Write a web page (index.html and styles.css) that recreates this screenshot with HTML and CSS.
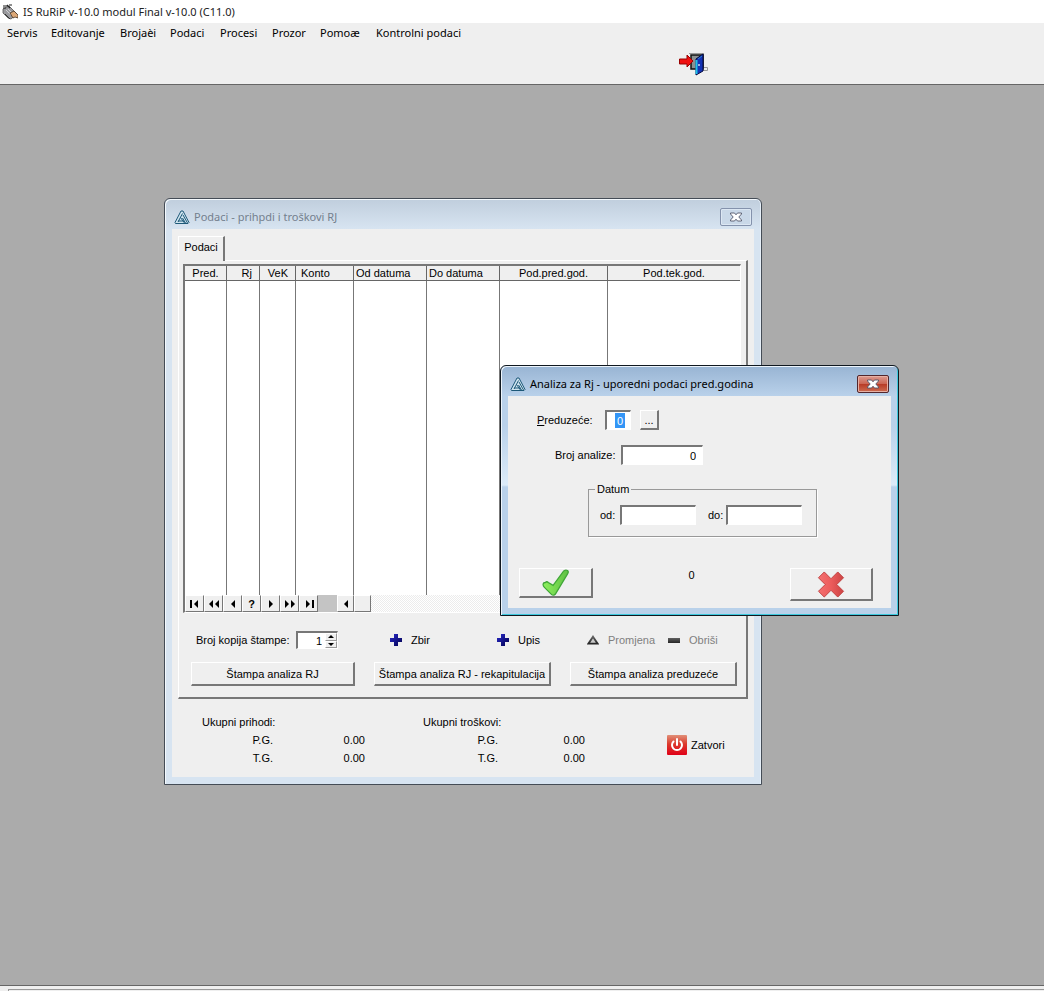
FILE: index.html
```html
<!DOCTYPE html>
<html lang="bs">
<head>
<meta charset="utf-8">
<title>IS RuRiP v-10.0 modul Final v-10.0 (C11.0)</title>
<link rel="stylesheet" href="styles.css">
</head>
<body>
<svg class="defs" aria-hidden="true">
  <defs>
    <linearGradient id="gNavy" x1="0" y1="0" x2="1" y2="1"><stop offset="0" stop-color="#2a2acc"/><stop offset="1" stop-color="#00004c"/></linearGradient>
    <linearGradient id="gDark" x1="0" y1="0" x2="0" y2="1"><stop offset="0" stop-color="#606060"/><stop offset="1" stop-color="#262626"/></linearGradient>
    <linearGradient id="gPower" x1="0" y1="0" x2="0" y2="1"><stop offset="0" stop-color="#e09078"/><stop offset=".45" stop-color="#dc3a2c"/><stop offset="1" stop-color="#e00018"/></linearGradient>
    <linearGradient id="gGreen" x1="0" y1="0" x2="1" y2="0"><stop offset="0" stop-color="#8df05c"/><stop offset="1" stop-color="#5fc044"/></linearGradient>
    <linearGradient id="gRed" x1="0" y1="0" x2="1" y2="0"><stop offset="0" stop-color="#f47070"/><stop offset=".5" stop-color="#ec5c5c"/><stop offset="1" stop-color="#cc4444"/></linearGradient>
    <symbol id="logo" viewBox="0 0 16 15"><path d="M7 1h2l6 11.500-1 1H1.500L1 12.500Z" fill="#cfe4ef" stroke="#1d5878"/><path d="M8.500 3.500 4 12M9 5l4.500 8M4 11h6M6.500 7.500l4 5.500M8.500 8l3 5" fill="none" stroke="#1d5878"/></symbol>
    <symbol id="plus" viewBox="0 0 12 12"><path d="M4 0h4v4h4v4H8v4H4V8H0V4h4Z" fill="url(#gNavy)"/></symbol>
    <symbol id="cross" viewBox="0 0 12 10"><path d="M.5 1h4L6 2.800 7.500 1h4v1L8.800 5l2.700 3v1h-4L6 7.200 4.500 9h-4V8l2.700-3L.5 2Z" fill="#fff" stroke="#50566a" stroke-width=".9"/></symbol>
  </defs>
</svg>
<div class="app">
  <header class="titlebar">
    <svg class="app-icon" viewBox="0 0 16 16"><path d="M1 5 7 2l8 8-6 5-3-1-5-5Z" fill="#9a9a9e" stroke="#555" stroke-width=".8"/><path d="M1 2h5M1 4h3M5 1l3 3M7 1h3" stroke="#222" stroke-width="1.200"/><path d="m4 6 6 6M6 5l5 5" stroke="#d0d0d4"/><path d="m8 9 4-2 4 4v3l-3-1-2 1Z" fill="#dca878" stroke="#432" stroke-width=".8"/><path d="m3 10 5 5" stroke="#333"/></svg>
    <h1>IS RuRiP v-10.0 modul Final v-10.0 (C11.0)</h1>
  </header>
  <nav class="menubar">
    <button>Servis</button><button>Editovanje</button><button>Brojaèi</button><button>Podaci</button><button>Procesi</button><button>Prozor</button><button>Pomoæ</button><button>Kontrolni podaci</button>
  </nav>
  <div class="toolbar">
    <button class="exit" aria-label="Izlaz"><svg viewBox="0 0 29 24"><path d="M10 1.500h15M24.500 1v15M24 15.500h4.500v3H20" fill="none" stroke="#9a9a9a"/><path d="M12 3h12v14H12Z" fill="#8a9090" stroke="#111" stroke-width="1.500"/><path d="M17 7 24 2v17l-7 4Z" fill="#1432b4" stroke="#020840"/><path d="M17.500 8v14" stroke="#20c0e8" stroke-width="2"/><path d="m19 7 4-3" stroke="#2880d8"/><circle cx="20" cy="13" r="1" fill="#cde"/><path d="M.5 7H8V3l6 6-6 6v-3H.5Z" fill="#f01010" stroke="#900"/></svg></button>
  </div>
  <main class="workspace">
    <section class="window data-window" aria-label="Podaci">
      <div class="caption"><svg class="logo"><use href="#logo"/></svg><h2>Podaci - prihpdi i troškovi RJ</h2><button class="close" aria-label="Zatvori prozor"><svg><use href="#cross"/></svg></button></div>
      <div class="client data-client">
        <div class="tabs"><button class="tab">Podaci</button></div>
        <div class="panel">
          <div class="browse">
            <table>
              <colgroup><col class="c-pred"><col class="c-rj"><col class="c-vek"><col class="c-konto"><col class="c-date"><col class="c-date"><col class="c-prev"><col></colgroup>
              <thead><tr><th class="center">Pred.</th><th class="right">Rj</th><th class="right">VeK</th><th class="inset">Konto</th><th>Od datuma</th><th>Do datuma</th><th class="center">Pod.pred.god.</th><th class="center">Pod.tek.god.</th></tr></thead>
              <tbody><tr><td></td><td></td><td></td><td></td><td></td><td></td><td></td><td></td></tr></tbody>
            </table>
            <div class="navigator">
              <button aria-label="Prvi"><svg viewBox="0 0 12 8"><path d="M1 0h2v8H1ZM9 0v8L5 4Z"/></svg></button>
              <button aria-label="Stranica nazad"><svg viewBox="0 0 12 8"><path d="M5 0v8L1 4ZM11 0v8L7 4Z"/></svg></button>
              <button aria-label="Prethodni"><svg viewBox="0 0 12 8"><path d="M8 0v8L4 4Z"/></svg></button>
              <button class="query">?</button>
              <button aria-label="Sljedeći"><svg viewBox="0 0 12 8"><path d="M4 0v8l4-4Z"/></svg></button>
              <button aria-label="Stranica naprijed"><svg viewBox="0 0 12 8"><path d="M1 0v8l4-4ZM7 0v8l4-4Z"/></svg></button>
              <button aria-label="Posljednji"><svg viewBox="0 0 12 8"><path d="M3 0v8l4-4ZM9 0h2v8H9Z"/></svg></button>
              <span class="nav-gap"></span>
              <button class="scroll" aria-label="Lijevo"><svg viewBox="0 0 12 8"><path d="M8 0v8L4 4Z"/></svg></button>
              <button class="scroll" aria-label="Klizač"></button>
              <span class="track"></span>
            </div>
          </div>
          <div class="actions">
            <label for="copies">Broj kopija štampe:</label>
            <span class="spin"><input id="copies" type="text" value="1"><span class="arrows"><button aria-label="Više"><svg viewBox="0 0 6 3"><path d="M0 3h6L3 0Z"/></svg></button><button aria-label="Manje"><svg viewBox="0 0 6 3"><path d="M0 0h6L3 3Z"/></svg></button></span></span>
            <button class="flat zbir"><svg><use href="#plus"/></svg>Zbir</button>
            <button class="flat upis"><svg><use href="#plus"/></svg>Upis</button>
            <button class="flat promjena" disabled><svg viewBox="0 0 13 12"><path d="M6.500 2.500 11.500 10h-10Z" fill="#c8c8c8" stroke="url(#gDark)" stroke-width="2"/></svg>Promjena</button>
            <button class="flat obrisi" disabled><svg viewBox="0 0 12 12"><path d="M0 4h12v5H0Z" fill="url(#gDark)"/></svg>Obriši</button>
          </div>
          <div class="prints"><button class="raised">Štampa analiza RJ</button><button class="raised">Štampa analiza RJ - rekapitulacija</button><button class="raised">Štampa analiza preduzeće</button></div>
        </div>
        <div class="footer">
          <dl class="totals income"><dt class="head">Ukupni prihodi:</dt><dt>P.G.</dt><dd>0.00</dd><dt>T.G.</dt><dd>0.00</dd></dl>
          <dl class="totals cost"><dt class="head">Ukupni troškovi:</dt><dt>P.G.</dt><dd>0.00</dd><dt>T.G.</dt><dd>0.00</dd></dl>
          <button class="flat power"><svg viewBox="0 0 20 20"><rect width="20" height="20" rx="1" fill="url(#gPower)"/><path d="M6.500 6.500a5 5 0 1 0 7 0M10 4v6" fill="none" stroke="#fff" stroke-width="2" stroke-linecap="round"/></svg>Zatvori</button>
        </div>
      </div>
    </section>
    <section class="window dialog" role="dialog" aria-label="Analiza za Rj">
      <div class="caption"><svg class="logo"><use href="#logo"/></svg><h2>Analiza za Rj - uporedni podaci pred.godina</h2><button class="close" aria-label="Zatvori dijalog"><svg><use href="#cross"/></svg></button></div>
      <form class="client dialog-client">
        <div class="field company"><label for="company"><u>P</u>reduzeće:</label><span class="sunken code"><input id="company" type="text" value="0"></span><button type="button" class="raised lookup">...</button></div>
        <div class="field number"><label for="number">Broj analize:</label><input class="sunken" id="number" type="text" value="0"></div>
        <fieldset><legend>Datum</legend><div class="dates"><label for="from">od:</label><input class="sunken" id="from" type="text"><label class="until" for="to">do:</label><input class="sunken" id="to" type="text"></div></fieldset>
        <div class="decision">
          <button type="button" class="raised ok" aria-label="U redu"><svg viewBox="0 0 28 28"><path d="M3 14c-3 0-3 3-1 5l7 7c2 2 4 1 5-1L26 5c2-3-1-5-4-3L11 17l-5-3c-1-1-2-1-3 0Z" fill="url(#gGreen)" stroke="#3fa636" stroke-width="1.300"/></svg></button>
          <output>0</output>
          <button type="button" class="raised cancel" aria-label="Odustani"><svg viewBox="0 0 28 28"><path d="m7 1 7 7 7-7 6 6-7 7 7 7-6 6-7-7-7 7-6-6 7-7-7-7Z" fill="url(#gRed)" stroke="#c04040" stroke-linejoin="round"/></svg></button>
        </div>
      </form>
    </section>
  </main>
  <footer class="statusbar"><div class="status-pane"></div></footer>
</div>
</body>
</html>
```
FILE: styles.css
```css
* { box-sizing: border-box; }
body { margin: 0; color: #000; font: 11px/14px "Liberation Sans", Arial, sans-serif; }
button, input { margin: 0; padding: 0; color: inherit; font: inherit; border: 0; border-radius: 0; }
button { background: transparent; }
svg { display: block; flex: none; }
label, h1, h2, dt, dd, button, output { white-space: nowrap; }
.defs { position: absolute; width: 0; height: 0; }

.app { display: flex; flex-direction: column; min-height: 100vh; background: #efefef; }
.titlebar { display: flex; align-items: center; gap: 5px; height: 23px; padding-left: 2px; background: #fff; }
.app-icon { width: 16px; height: 16px; }
h1, h2, .menubar { margin: 0; font: 11px/16px "Segoe UI", "Noto Sans", sans-serif; }
h1 { color: #222; }
.menubar { display: grid; grid-template-columns: 44px 69px 50px 50px 52px 48px 56px 1fr; height: 20px; padding-left: 7px; }
.menubar button { text-align: left; }
.toolbar { display: flex; height: 42px; padding: 9px 0 0 679px; border-bottom: 1px solid #666; }
.exit { height: 24px; }
.exit svg { width: 29px; height: 24px; }
.workspace { position: relative; flex: 1; min-height: 720px; background: #ababab; }
.statusbar { height: 6px; padding: 3px 0 0 8px; border-top: 1px solid #666; }
.status-pane { height: 2px; border-top: 1px solid #999; border-left: 1px solid #999; }

.window { position: absolute; padding: 0 7px 7px; border: 1px solid #444c56; border-radius: 6px 6px 0 0; }
.data-window { left: 164px; top: 113px; width: 598px; background: linear-gradient(#c0cedd, #d7e4f1 30px); box-shadow: inset 1px 1px #f4f9fd, inset -1px 0 #e6eff8; }
.dialog { left: 500px; top: 280px; width: 399px; border-color: #101820; background: linear-gradient(#98b4d3, #b9d1ea 30px, #b9d1ea 60px, #dcebf8 119px, #b9d1ea 121px); box-shadow: inset 1px 1px #edf5fc, inset -1px -1px #3cc8dc; }
.caption { display: flex; align-items: center; height: 30px; padding: 6px 2px 0; }
.logo { width: 16px; height: 15px; }
h2 { flex: 1; padding-left: 4px; }
.data-window h2 { color: #74808e; }
.close { display: flex; align-items: center; justify-content: center; width: 32px; height: 18px; border: 1px solid #8492ac; border-radius: 2px; background: #c9d8e8; box-shadow: inset 0 0 0 1px #dce7f3; }
.close svg { width: 12px; height: 10px; }
.dialog .close { border-color: #52262c; background: linear-gradient(#dc9a90, #cb6654 48%, #b73a26 50%, #cd6c50); box-shadow: inset 0 0 0 1px #e6b0a4; }
.client { background: #efefef; }

.data-client { padding: 7px 6px 10px 6px; }
.tabs { display: flex; height: 24px; }
.tab { width: 47px; height: 25px; padding-bottom: 4px; border: solid; border-width: 1px 2px 0 1px; border-color: #fff #777 #fff #fff; background: #efefef; z-index: 1; }
.panel { padding: 3px 5px 11px 4px; border: solid; border-width: 1px 2px 2px 1px; border-color: #fff #777 #777 #fff; }
.browse { border: solid; border-width: 2px 1px 1px 2px; border-color: #777 #fff #fff #777; }
table { width: 100%; table-layout: fixed; border-collapse: separate; border-spacing: 0; background: #fff; }
.c-pred { width: 42px; } .c-rj { width: 33px; } .c-vek { width: 36px; } .c-konto { width: 58px; } .c-date { width: 73px; } .c-prev { width: 108px; }
th { height: 15px; padding: 0 2px; font-weight: normal; line-height: 13px; text-align: left; white-space: nowrap; border-right: 1px solid #666; border-bottom: 1px solid #666; background: #efefef; }
td { height: 314px; padding: 0; border-right: 1px solid #777; }
th:last-child, td:last-child { border-right: 0; }
th.center { text-align: center; }
th.right { padding-right: 7px; text-align: right; }
th.inset { padding-left: 5px; }
.navigator { display: flex; height: 17px; }
.navigator button { display: flex; align-items: center; justify-content: center; width: 19px; border: 1px solid; border-color: #fff #777 #777 #fff; background: #efefef; }
.navigator svg { width: 12px; height: 8px; }
.navigator .query { font-weight: bold; }
.nav-gap { width: 19px; background: #c4c4c4; }
.navigator .scroll { width: 17px; }
.track { flex: 1; background: repeating-conic-gradient(#fff 0 25%, #ececec 0 50%) 0 0 / 2px 2px; }

.actions { display: flex; align-items: center; height: 18px; margin-top: 18px; padding-left: 13px; }
.actions label { width: 100px; }
.spin { display: flex; width: 42px; height: 18px; margin-right: 52px; border: solid; border-width: 2px 1px 1px 2px; border-color: #777 #fff #fff #777; background: #fff; }
.spin input { flex: 1; min-width: 0; padding-right: 3px; text-align: right; background: #fff; }
.arrows { display: flex; flex-direction: column; width: 12px; }
.arrows button { display: flex; flex: 1; align-items: center; justify-content: center; border: 1px solid; border-color: #fff #999 #999 #fff; background: #efefef; }
.arrows svg { width: 6px; height: 3px; }
.flat { display: flex; align-items: center; gap: 9px; }
.flat:disabled { color: #808080; }
.flat svg { width: 12px; height: 12px; }
.zbir { width: 107px; }
.upis { width: 90px; }
.promjena { width: 81px; }
.prints { display: grid; grid-template-columns: 165fr 178fr 168fr; column-gap: 19px; margin-top: 13px; padding: 0 4px 0 8px; }
.raised { height: 24px; border: solid; border-width: 1px 2px 2px 1px; border-color: #fff #777 #777 #fff; background: #efefef; }

.footer { display: flex; align-items: flex-start; padding: 14px 0 0 24px; }
.totals { display: grid; grid-template-columns: 71px 92px; grid-auto-rows: 18px; align-items: center; margin: 0; text-align: right; }
.totals.cost { grid-template-columns: 75px 87px; margin-left: 58px; }
.totals .head { grid-column: 1 / -1; text-align: left; }
.totals dd { margin: 0; }
.power { gap: 4px; margin: 22px 0 0 82px; }
.power svg { width: 20px; height: 20px; }

.dialog-client { padding: 14px 18px 7px 11px; }
.field { display: flex; align-items: center; height: 20px; }
.company { padding-left: 18px; }
.company label { width: 68px; }
.sunken { height: 20px; padding-right: 6px; text-align: right; border: solid; border-width: 2px 1px 1px 2px; border-color: #777 #fff #fff #777; background: #fff; }
.code { display: flex; justify-content: flex-end; width: 26px; padding: 1px 5px 1px 0; }
.code input { width: 10px; color: #fff; text-align: center; background: #3395f6; }
.lookup { width: 19px; height: 20px; margin-left: 9px; line-height: 12px; }
.number { margin-top: 15px; padding-left: 36px; }
.number label { width: 66px; }
.number input { width: 82px; }
fieldset { width: 229px; margin: 17px 0 0 69px; padding: 0 11px 11px; border: 1px solid #999; box-shadow: 1px 1px #fff; }
legend { margin-left: -5px; padding: 0 2px; background: #efefef; }
.dates { display: flex; align-items: center; padding-top: 9px; }
.dates label { width: 20px; }
.dates .until { width: 18px; margin-left: 12px; }
.dates input { width: 76px; }
.decision { display: flex; align-items: flex-start; margin-top: 31px; }
.decision button { display: flex; align-items: center; justify-content: center; }
.decision svg { width: 28px; height: 27px; }
.ok { width: 74px; height: 30px; }
.cancel { width: 83px; height: 33px; }
output { flex: 1; text-align: center; }
```
